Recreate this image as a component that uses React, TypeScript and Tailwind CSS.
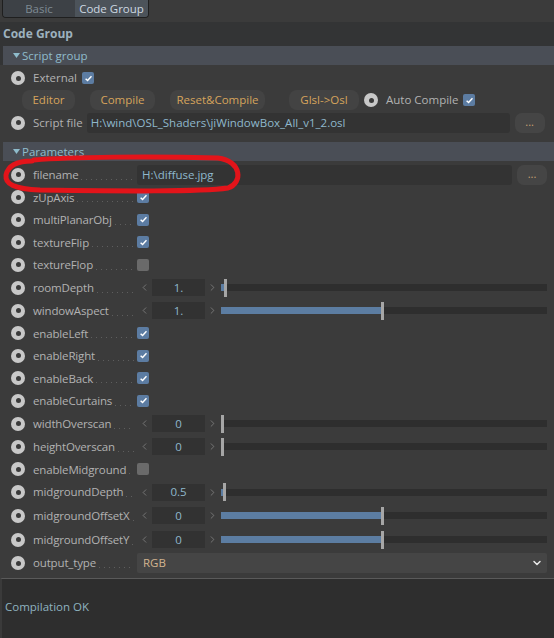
import React from "react";
import { ChevronDown, ChevronLeft, ChevronRight } from "lucide-react";

const FONT = { fontFamily: '"Segoe UI", "Open Sans", "Noto Sans", sans-serif' };

function Dot() {
  return (
    <span className="w-[14px] h-[14px] rounded-full bg-[#c8c8c8] flex items-center justify-center shrink-0">
      <span className="w-[5px] h-[5px] rounded-full bg-[#3a3a3a]" />
    </span>
  );
}

function Check({ on = true }: { on?: boolean }) {
  if (!on) return <span className="w-[12px] h-[12px] rounded-[2px] bg-[#6a6a6a] shrink-0" />;
  return (
    <span className="w-[12px] h-[12px] rounded-[2px] bg-[#5c7ca2] flex items-center justify-center shrink-0">
      <svg width="9" height="9" viewBox="0 0 10 10">
        <path d="M1.8 5.2 L4 7.3 L8.3 2.6" fill="none" stroke="#ffffff" strokeWidth="1.6" />
      </svg>
    </span>
  );
}

function Leader() {
  return (
    <span className="flex-1 min-w-0 h-[1px] mt-[9px] mx-[3px] bg-[linear-gradient(to_right,#5e5e5e_1px,transparent_1px)] bg-[length:5px_1px] bg-repeat-x" />
  );
}

function Row({ label, h, children }: { label: string; h: string; children?: React.ReactNode }) {
  return (
    <div className={`flex items-center ${h}`}>
      <span className="ml-[11px]">
        <Dot />
      </span>
      <div className="ml-[8px] w-[104px] shrink-0 flex items-center">
        <span className="text-[11.5px] tracking-[-0.15px] text-[#b2b2b2] whitespace-nowrap">{label}</span>
        <Leader />
      </div>
      <div className="w-[410px] flex items-center shrink-0">{children}</div>
    </div>
  );
}

function Slider({ value, pct, fill }: { value: string; pct: number; fill: boolean }) {
  return (
    <div className="flex items-center w-full">
      <span className="w-[15px] flex items-center justify-center">
        <ChevronLeft size={11} strokeWidth={1.5} color="#8e8e8e" />
      </span>
      <span className="w-[53px] h-[17px] bg-[#323232] text-[11.5px] text-[#8fb8cc] flex items-center justify-center">
        {value}
      </span>
      <span className="w-[15px] flex items-center justify-center">
        <ChevronRight size={11} strokeWidth={1.5} color="#8e8e8e" />
      </span>
      <div className="flex-1 ml-[1px] relative h-[18px] flex items-center">
        <div className="w-full h-[7px] bg-[#2e2e2e] relative">
          {fill && <div className="absolute left-0 top-0 h-full bg-[#5c7da2]" style={{ width: `${pct}%` }} />}
        </div>
        <div className="absolute top-0 h-[18px] w-[3px] bg-[#a6a6a6]" style={{ left: `${pct}%` }} />
      </div>
    </div>
  );
}

function SmallBtn() {
  return (
    <span className="w-[30px] h-[20px] rounded-[7px] bg-[#454545] text-[11px] text-[#c9a273] flex items-center justify-center leading-none pb-[3px]">
      ...
    </span>
  );
}

function Pill({ label, w }: { label: string; w: string }) {
  return (
    <span className={`${w} h-[20px] rounded-[8px] bg-[#434343] text-[11.5px] text-[#d6a35c] flex items-center justify-center shrink-0`}>
      {label}
    </span>
  );
}

function SectionHeader({ label }: { label: string }) {
  return (
    <div className="ml-[3px] h-[19px] bg-[#4a4e56] flex items-center">
      <svg width="7" height="5" viewBox="0 0 7 5" className="ml-[10px]">
        <path d="M0 0 H7 L3.5 5 Z" fill="#8fbccc" />
      </svg>
      <span className="ml-[2px] text-[11.5px] text-[#8fbccc]">{label}</span>
    </div>
  );
}

export default function App() {
  return (
    <div className="w-[554px] h-[638px] bg-[#3b3b3b] flex flex-col overflow-hidden relative" style={FONT}>
      {/* tabs */}
      <div className="h-[18px] flex">
        <div className="ml-[2px] flex border border-t-0 border-[#1f1f1f] rounded-b-[4px] overflow-hidden">
          <span className="w-[72px] bg-[#3d4146] text-[11.5px] text-[#7e8a93] flex items-center justify-center">Basic</span>
          <span className="w-[73px] bg-[#4c535a] text-[11.5px] text-[#ccd8e1] flex items-center justify-center">Code Group</span>
        </div>
      </div>
      <div className="h-[4px]" />
      <div className="h-[24px] bg-[#333435] flex items-center">
        <span className="ml-[3px] text-[12px] font-bold text-[#9db1be]">Code Group</span>
      </div>
      <div className="bg-[#333435]">
        <SectionHeader label="Script group" />
      </div>

      {/* script group */}
      <div className="h-[2px]" />
      <div className="h-[22px] flex items-center">
        <span className="ml-[11px]"><Dot /></span>
        <span className="ml-[8px] text-[11.5px] text-[#b2b2b2]">External</span>
        <span className="ml-[5px]"><Check /></span>
      </div>
      <div className="h-[22px] flex items-center">
        <span className="ml-[22px]"><Pill label="Editor" w="w-[53px]" /></span>
        <span className="ml-[15px]"><Pill label="Compile" w="w-[65px]" /></span>
        <span className="ml-[15px]"><Pill label="Reset&Compile" w="w-[95px]" /></span>
        <span className="ml-[24px]"><Pill label="Glsl->Osl" w="w-[70px]" /></span>
        <span className="ml-[5px]"><Dot /></span>
        <span className="ml-[8px] text-[11.5px] text-[#b2b2b2]">Auto Compile</span>
        <span className="ml-[5px]"><Check /></span>
      </div>
      <div className="h-[23px] flex items-center">
        <span className="ml-[11px]"><Dot /></span>
        <span className="ml-[8px] text-[11.5px] text-[#b2b2b2]">Script file</span>
        <span className="ml-[4px] w-[423px] h-[20px] bg-[#333333] rounded-[3px] text-[11.5px] text-[#8fb8cc] flex items-center pl-[4px]">
          H:\wind\OSL_Shaders\jiWindowBox_All_v1_2.osl
        </span>
        <span className="ml-[5px]"><SmallBtn /></span>
      </div>
      <div className="h-[8px]" />

      {/* parameters */}
      <SectionHeader label="Parameters" />
      <div className="h-[2px]" />
      <Row label="filename" h="h-[23px]">
        <span className="w-[375px] h-[20px] bg-[#333333] rounded-[3px] text-[11.5px] text-[#8fb8cc] flex items-center pl-[5px]">
          H:\diffuse.jpg
        </span>
        <span className="ml-[5px]"><SmallBtn /></span>
      </Row>
      <Row label="zUpAxis" h="h-[22.5px]"><Check /></Row>
      <Row label="multiPlanarObj" h="h-[22.5px]"><Check /></Row>
      <Row label="textureFlip" h="h-[22.5px]"><Check /></Row>
      <Row label="textureFlop" h="h-[22.5px]"><Check on={false} /></Row>
      <Row label="roomDepth" h="h-[23px]"><Slider value="1." pct={0.8} fill /></Row>
      <Row label="windowAspect" h="h-[23px]"><Slider value="1." pct={49.2} fill /></Row>
      <Row label="enableLeft" h="h-[22.5px]"><Check /></Row>
      <Row label="enableRight" h="h-[22.5px]"><Check /></Row>
      <Row label="enableBack" h="h-[22.5px]"><Check /></Row>
      <Row label="enableCurtains" h="h-[22.5px]"><Check /></Row>
      <Row label="widthOverscan" h="h-[23px]"><Slider value="0" pct={0} fill={false} /></Row>
      <Row label="heightOverscan" h="h-[23px]"><Slider value="0" pct={0} fill={false} /></Row>
      <Row label="enableMidground" h="h-[22.5px]"><Check on={false} /></Row>
      <Row label="midgroundDepth" h="h-[23px]"><Slider value="0.5" pct={0.5} fill /></Row>
      <Row label="midgroundOffsetX" h="h-[24px]"><Slider value="0" pct={49.2} fill /></Row>
      <Row label="midgroundOffsetY" h="h-[24px]"><Slider value="0" pct={49.2} fill /></Row>
      <Row label="output_type" h="h-[23px]">
        <span className="w-full h-[20px] bg-[#454545] rounded-[2px] flex items-center justify-between pl-[6px] pr-[4px]">
          <span className="text-[11.5px] text-[#d2b48f]">RGB</span>
          <ChevronDown size={12} strokeWidth={3} color="#e8e8e8" />
        </span>
      </Row>
      <div className="h-[3px]" />

      {/* log */}
      <div className="flex-1 bg-[#2e2e2e] border-t border-[#5a5a5a] border-l-2 border-l-[#3a3a3a]">
        <div className="pt-[19px] pl-[3px] text-[11.5px] text-[#8fb3c0]">Compilation OK</div>
      </div>

      {/* red annotation */}
      <svg className="absolute left-0 top-0 pointer-events-none" width="554" height="638" viewBox="0 0 554 638">
        <path
          d="M34 160 C70 157 150 156 218 158 C242 161 243 183 228 188 C200 192 120 191 40 190 C14 189 5 184 6 175 C8 166 17 161 32 161"
          fill="none"
          stroke="#e3141a"
          strokeWidth="5"
          strokeLinecap="round"
        />
      </svg>
    </div>
  );
}
